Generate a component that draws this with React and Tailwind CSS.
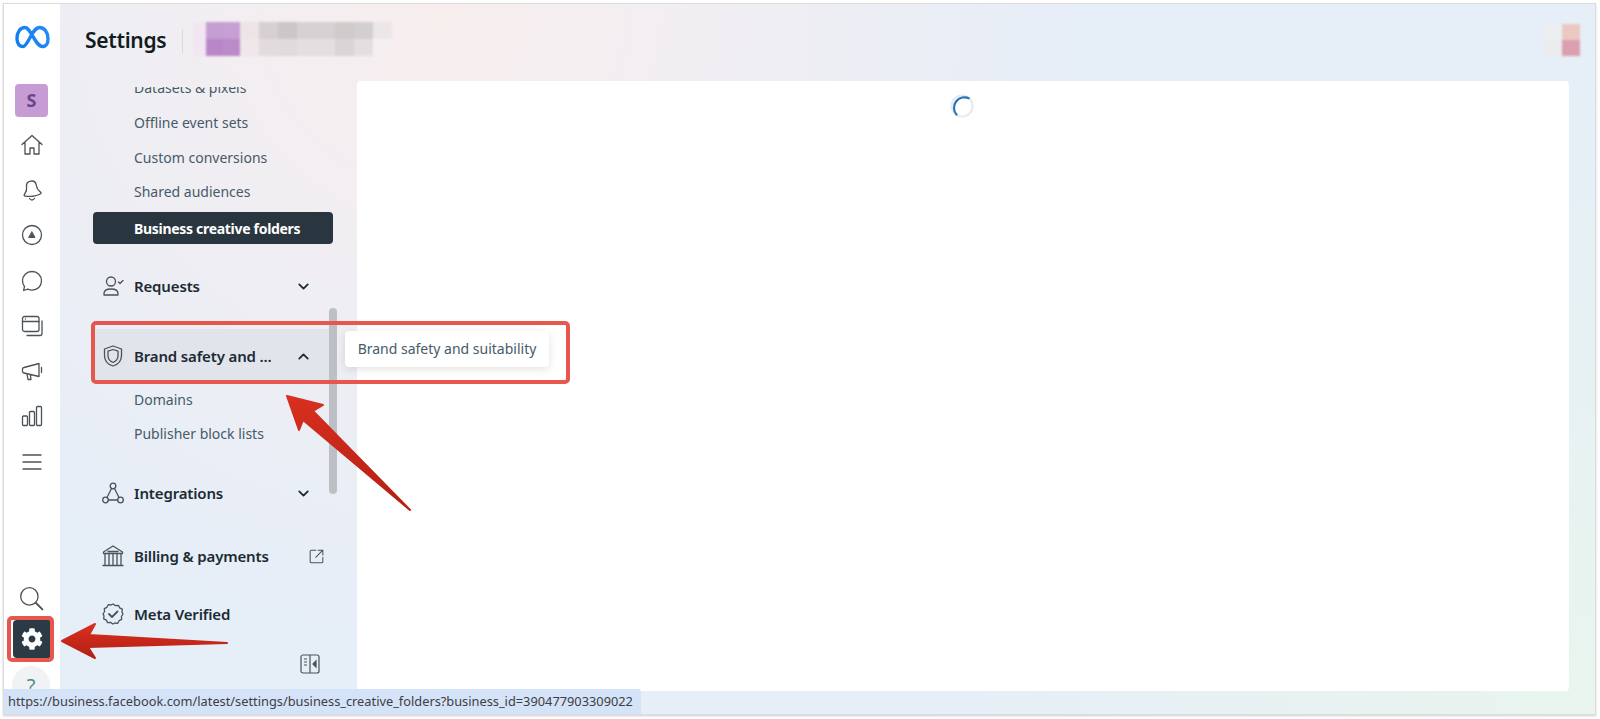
import React from 'react';
import { FaCog } from 'react-icons/fa';

const ink = '#4b5258';

const Ic = ({ size = 24, children, color = ink, sw = 1.3 }) => (
    <svg width={size} height={size} viewBox="0 0 24 24" fill="none" stroke={color} strokeWidth={sw} strokeLinecap="round" strokeLinejoin="round">
        {children}
    </svg>
);

const railIcons = [
    <Ic><path d="M2 11.5 12 2.5l10 9M5 9.5V21h5v-6h4v6h5V9.5" /></Ic>,
    <Ic><path d="M12 3c-3.5 0-5 2.6-5 5.5 0 4-2.2 5.5-3.4 7.2-.4.6 0 1.2.7 1.4 2.5.7 5 1.2 7.7 1.2s5.200-.5 7.700-1.200c.7-.2 1.100-.8.7-1.400C19.200 14 17 12.500 17 8.500 17 5.600 15.500 3 12 3Z" transform="rotate(-8 12 12)" /><path d="M9.500 20.500c.6 1 1.500 1.500 2.500 1.500s1.900-.5 2.500-1.500" /></Ic>,
    <Ic><circle cx="12" cy="12" r="9.500" /><path d="M12 9 15 14.500H9Z" fill={ink} strokeWidth="1" /></Ic>,
    <Ic><path d="M12 2.500c-5.500 0-9.500 4-9.500 9.300 0 2.200.7 4.200 2 5.700l-.9 4 4.300-1.300c1.300.6 2.700.9 4.100.9 5.500 0 9.500-4 9.500-9.300s-4-9.300-9.500-9.300Z" /></Ic>,
    <Ic><rect x="2.500" y="2.500" width="16.500" height="15" rx="2" /><path d="M2.500 7.500H19M5.500 5h.01M22 7v12.500a2 2 0 0 1-2 2H7" /></Ic>,
    <Ic><path d="M4 8.500 19 4.500v13L4 14a1.500 1.500 0 0 1-1.500-1.500v-2.500A1.500 1.500 0 0 1 4 8.500ZM7 15l1 5.500h3l-.7-4.700M21.500 8.500v5" /></Ic>,
    <Ic><rect x="2.500" y="12" width="5" height="9.500" rx="1" /><rect x="9.500" y="7.500" width="5" height="14" rx="1" /><rect x="16.500" y="2.500" width="5" height="19" rx="1" /></Ic>,
    <Ic><path d="M3 5h18M3 12h18M3 19h18" /></Ic>,
];

const MetaLogo = () => (
    <svg width="35" height="24" viewBox="0 0 35 24" fill="none">
        <defs>
            <linearGradient id="metaBlue" x1="0" y1="24" x2="35" y2="0" gradientUnits="userSpaceOnUse">
                <stop stopColor="#0a7cf0" />
                <stop offset="1" stopColor="#2a8cf5" />
            </linearGradient>
        </defs>
        <path d="M8 21.500C4 21.500 2 18 2 13.500 2 7 5.500 2.500 10 2.500c6 0 10 19 17.500 19 3.500 0 5.500-3 5.500-7.500 0-6.500-3.500-11.500-8.500-11.500C17 2.500 13 21.500 8 21.500Z" stroke="url(#metaBlue)" strokeWidth="3.400" strokeLinejoin="round" />
    </svg>
);

const Row = ({ icon, label, right, active, className = '' }) => (
    <div className={`flex items-center h-[46px] pl-[8px] pr-[21px] ${active ? 'bg-[#e2e4ec]' : ''} ${className}`}>
        <div className="w-[24px] flex justify-center mr-[9px]">{icon}</div>
        <span className="flex-1 text-[15px] font-semibold tracking-[-0.15px] text-[#1c2b33] whitespace-nowrap">{label}</span>
        {right}
    </div>
);

const Chevron = ({ up }) => (
    <Ic size={17} color="#1c2b33" sw={2.500}>
        <path d={up ? 'm6 15 6-6 6 6' : 'm6 9 6 6 6-6'} />
    </Ic>
);

const SubItem = ({ children, className = '' }) => (
    <div className={`h-[34px] flex items-center pl-[74px] text-[14px] text-[#465a69] whitespace-nowrap ${className}`}>{children}</div>
);

// pixelated account name in the header
const blurCells = [
    ['#f1e6f1', '#c59ed2', '#c79fd3', '#ece4e6', '#d6d0d2', '#cdc6c8', '#d6d1d2', '#d6d1d2', '#d0cbcb', '#d3cecf', '#ebe6e8'],
    ['#f1e6f1', '#b987c8', '#bb8ac9', '#efe7ea', '#e2dcdf', '#e0dbdd', '#e3dfe1', '#e3dfe1', '#d9d4d6', '#e3dfe1', '#f5eff1'],
];

export default function App() {
    return (
        <div className="relative w-[1600px] h-[719px] bg-white overflow-hidden font-['Noto_Sans',sans-serif]">
            {/* window */}
            <div className="absolute left-[3px] top-[3px] w-[1593px] h-[712px] flex border border-[#dcdcdc] shadow-[0_1px_2px_rgba(0,0,0,0.2)] bg-white overflow-hidden">
                {/* rail */}
                <div className="w-[56px] shrink-0 flex flex-col items-center bg-white">
                    <div className="h-[80px] flex items-center justify-center pb-[14px]"><MetaLogo /></div>
                    <div className="w-[33px] h-[33px] -ml-[1px] rounded-[4px] bg-[#c79bd4] flex items-center justify-center text-[#67478a] font-bold text-[18px]">S</div>
                    <div className="flex flex-col items-center mt-[5px]">
                        {railIcons.map((icon, i) => (
                            <div key={i} className="h-[45.300px] flex items-center justify-center">{icon}</div>
                        ))}
                    </div>
                    <div className="flex-1" />
                    <span className="-ml-[2px]"><Ic size={26} sw={1.200}><circle cx="10.500" cy="10.500" r="8" /><path d="m16.500 16.500 6 6" strokeWidth="1.800" /></Ic></span>
                    <div className="w-[39px] h-[38px] rounded-[4px] bg-[#2b3a45] flex items-center justify-center mt-[9px] text-white"><FaCog size={22} /></div>
                    <div className="w-[38px] h-[38px] -ml-[2px] rounded-full bg-[#f0f2f3] flex items-start justify-center mt-[8px] mb-[10px] pt-[5px] text-[#4f8a93] text-[20px]">?</div>
                </div>

                {/* main */}
                <div className="flex-1 flex flex-col bg-[radial-gradient(circle_at_25%_0%,#f8eeee_0%,rgba(248,238,238,0)_48%),radial-gradient(circle_at_100%_100%,#e9f5ee_0%,rgba(233,245,238,0)_40%),linear-gradient(#e6eef8,#e6eef8)]">
                    <div className="h-[77px] shrink-0 flex items-center pl-[25px] relative">
                        <h1 className="text-[21px] font-semibold tracking-[-0.3px] text-[#111b21] -mt-[4px]">Settings</h1>
                        <div className="w-px h-[24px] bg-[#dcd9dc] ml-[16px] -mt-[4px]" />
                        <div className="ml-[10px] -mt-[8px] grid grid-cols-[13px_17px_17px_repeat(8,19px)] grid-rows-[17px_17px] blur-[1px]">
                            {blurCells.flat().map((c, i) => <div key={i} style={{ backgroundColor: c }} />)}
                        </div>
                        <div className="absolute right-[15px] top-[20px] grid grid-cols-[18px_18px] grid-rows-[16px_16px] blur-[1px]">
                            <div className="bg-[#eceff2]" />
                            <div className="bg-[#ecc8c2]" />
                            <div className="bg-[#ebecee]" />
                            <div className="bg-[#dba0ae]" />
                        </div>
                    </div>
                    <div className="flex-1 flex min-h-0">
                        {/* sidebar */}
                        <div className="relative w-[297px] shrink-0 overflow-hidden mt-[6px]">
                            <div className="-mt-[17px]">
                                <SubItem>Datasets &amp; pixels</SubItem>
                                <SubItem className="mt-px">Offline event sets</SubItem>
                                <SubItem className="mt-px">Custom conversions</SubItem>
                                <SubItem>Shared audiences</SubItem>
                                <div className="ml-[33px] mt-[4px] w-[240px] h-[32px] rounded-[4px] bg-[#29363f] flex items-center pl-[41px] text-white text-[14px] font-bold tracking-[-0.3px] whitespace-nowrap">Business creative folders</div>
                                <div className="ml-[33px] w-[240px] mt-[19px]">
                                    <Row
                                        label="Requests"
                                        right={<Chevron />}
                                        icon={<Ic><circle cx="10" cy="7.500" r="4.500" /><path d="M3 21v-1.500C3 16.500 6 15 10 15s7 1.500 7 4.500V21ZM17.500 8l1.500 1.500L22 6.500" /></Ic>}
                                    />
                                    <Row
                                        active
                                        className="mt-[20px] h-[54px]"
                                        label="Brand safety and ..."
                                        right={<Chevron up />}
                                        icon={<Ic><path d="M12 2 3.500 5v6.500C3.500 17 7 20.500 12 22c5-1.500 8.500-5 8.500-10.500V5Z" /><path d="M12 5.500 7 7.200v4.500c0 3.300 2 5.500 5 6.800 3-1.300 5-3.500 5-6.800V7.200Z" /></Ic>}
                                    />
                                </div>
                                <SubItem className="-mt-px">Domains</SubItem>
                                <SubItem>Publisher block lists</SubItem>
                                <div className="ml-[33px] w-[240px] mt-[20px]">
                                    <Row
                                        label="Integrations"
                                        right={<Chevron />}
                                        icon={<Ic><circle cx="12" cy="5" r="2.800" /><circle cx="4.500" cy="19" r="2.800" /><circle cx="19.500" cy="19" r="2.800" /><path d="M10.500 7.500 6 16.500M13.500 7.500l4.500 9M7.300 19h9.400" /></Ic>}
                                    />
                                    <Row
                                        className="mt-[17px]"
                                        label="Billing & payments"
                                        right={<span className="-mr-[14px]"><Ic size={19}><path d="M11 4H5.500A1.500 1.500 0 0 0 4 5.500v13A1.500 1.500 0 0 0 5.500 20h13a1.500 1.500 0 0 0 1.500-1.500V13M14 4h6v6M20 4l-9 9" /></Ic></span>}
                                        icon={<Ic><path d="M12 2 2.500 8v1.500h19V8ZM4 9.500v11M8 9.500v11M12 9.500v11M16 9.500v11M20 9.500v11M2 21.500h20M7 7.500h10" /></Ic>}
                                    />
                                    <Row
                                        className="mt-[12px]"
                                        label="Meta Verified"
                                        icon={<Ic><path d="m12 2 2.500 1.600 2.900-.3 1.300 2.600 2.600 1.300-.3 2.900L22 12l-1.600 2.500.3 2.900-2.600 1.300-1.300 2.600-2.900-.3L12 22l-2.500-1.600-2.900.3-1.300-2.600-2.600-1.300.3-2.900L2 12l1.600-2.500-.3-2.900 2.600-1.300 1.300-2.600 2.900.3Z" /><path d="m8 12 3 3 5.500-5.500" strokeWidth="1.800" /></Ic>}
                                    />
                                </div>
                                <div className="flex justify-end pr-[37px] mt-[17px]">
                                    <svg width="20" height="20" viewBox="0 0 20 20" fill="none" stroke={ink} strokeWidth="1.200">
                                        <rect x="1" y="1" width="18" height="18" rx="2" />
                                        <path d="M10 1v18M4 5h3M4 8h3M4 11h3" />
                                        <path d="m16 7-3 3 3 3Z" fill={ink} />
                                    </svg>
                                </div>
                            </div>
                        </div>
                        {/* content */}
                        <div className="w-[1212px] h-[610px] bg-white rounded-[4px] flex justify-center pt-[13px]">
                            <svg width="24" height="24" viewBox="0 0 24 24" fill="none" strokeWidth="2.200" className="-ml-[2px]">
                                <circle cx="12" cy="12" r="10.500" stroke="#e8eaec" />
                                <path d="M7 21.200A10.500 10.500 0 0 1 19.500 4.600" stroke="#2374bb" />
                            </svg>
                        </div>
                    </div>
                </div>
            </div>

            {/* sidebar scrollbar */}
            <div className="absolute left-[329px] top-[308px] w-[8px] h-[186px] rounded-[4px] bg-[#bcc0c4]" />

            {/* tooltip */}
            <div className="absolute left-[345px] top-[331px] w-[204px] h-[36px] rounded-[4px] bg-white shadow-[0_2px_8px_rgba(0,0,0,0.12)] flex items-center justify-center pb-[2px] text-[14px] text-[#465a69] whitespace-nowrap">Brand safety and suitability</div>

            {/* annotations */}
            <div className="absolute left-[91px] top-[321px] w-[479px] h-[63px] rounded-[5px] border-[4px] border-[#e8574d]" />
            <div className="absolute left-[7px] top-[616px] w-[47px] h-[46px] rounded-[5px] border-[4px] border-[#e8574d]" />
            <svg className="absolute left-0 top-0 pointer-events-none" width="1600" height="719" viewBox="0 0 1600 719">
                <defs>
                    <linearGradient id="arrowRed" x1="0" y1="0" x2="0" y2="1">
                        <stop offset="0" stopColor="#d9301f" />
                        <stop offset="1" stopColor="#b31e14" />
                    </linearGradient>
                </defs>
                <path d="M287 396 323 405 313 411 410 510 303 420 299 430Z" fill="url(#arrowRed)" stroke="url(#arrowRed)" strokeWidth="2" strokeLinejoin="round" />
                <path d="M62 641 95 624 89 635 227 643 88 647 95 658Z" fill="url(#arrowRed)" stroke="url(#arrowRed)" strokeWidth="2" strokeLinejoin="round" />
            </svg>

            {/* status bar */}
            <div className="absolute left-[4px] top-[689px] w-[637px] h-[25px] bg-[#d5e3f8] rounded-tr-[3px] flex items-center pl-[4px] text-[12.800px] text-[#3c4043] whitespace-nowrap">https://business.facebook.com/latest/settings/business_creative_folders?business_id=390477903309022</div>
        </div>
    );
}
